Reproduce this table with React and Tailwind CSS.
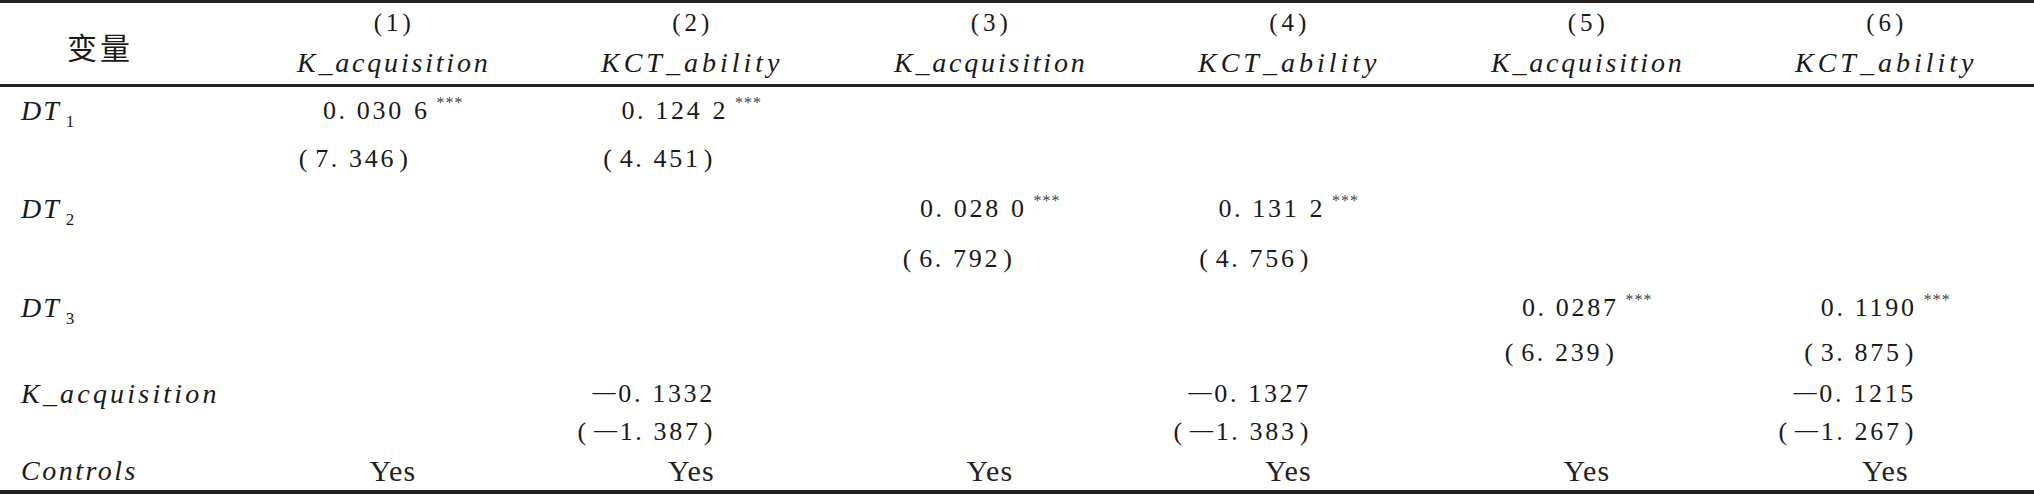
import React from "react";

const SERIF = "font-['Liberation_Serif',serif]";

function Num({ s, stars }) {
  return (
    <div className={`${SERIF} text-[26px] leading-none tracking-[2.7px] whitespace-nowrap text-[#1a1a1a]`}>
      {s.split("").map((ch, i) => {
        if (ch === "−")
          return (
            <span key={i} className="text-[23px] leading-[0] align-[3px]">
              —
            </span>
          );
        if (ch === ".")
          return (
            <span key={i} className="mr-[9px]">
              .
            </span>
          );
        if (ch === "(")
          return (
            <span key={i} className="mr-[5px]">
              (
            </span>
          );
        if (ch === ")")
          return (
            <span key={i} className="ml-[3px]">
              )
            </span>
          );
        if (ch === " ") return <span key={i} className="inline-block w-[10px]" />;
        return <span key={i}>{ch}</span>;
      })}
      {stars && (
        <span className="ml-[7px] text-[16px] leading-[0] tracking-[1px] align-[11px] text-[#444]">***</span>
      )}
    </div>
  );
}

const RIGHT_PAD = ["pr-[131px]", "pr-[125px]", "pr-[124px]", "pr-[126px]", "pr-[119px]", "pr-[118px]"];

function Cell({ cell, col }) {
  if (!cell) return <div />;
  if (cell.t === "c")
    return (
      <div className="flex items-center justify-center pl-[2px]">
        <Num s={cell.v} stars />
      </div>
    );
  if (cell.t === "y")
    return (
      <div className="flex items-center justify-center">
        <div className={`${SERIF} text-[30px] leading-none tracking-[1px] pl-[1px] text-[#222]`}>Yes</div>
      </div>
    );
  return (
    <div className={`flex items-center justify-end ${RIGHT_PAD[col]}`}>
      <Num s={cell.v} />
    </div>
  );
}

function DT({ n }) {
  return (
    <div className={`${SERIF} italic text-[28px] leading-none tracking-[2px] whitespace-nowrap text-[#1a1a1a]`}>
      DT
      <span className="ml-[5px] not-italic text-[17px] leading-[0] tracking-normal align-[-7px]">{n}</span>
    </div>
  );
}

function Word({ w, track }) {
  return (
    <div className={`${SERIF} italic text-[28px] leading-none whitespace-nowrap text-[#1a1a1a] ${track}`}>{w}</div>
  );
}

const c = (v) => ({ t: "c", v });
const r = (v) => ({ t: "r", v });
const Y = { t: "y" };
const _ = null;

const rows = [
  { label: <DT n="1" />, h: "h-[47px]", cells: [c("0.030 6"), c("0.124 2"), _, _, _, _] },
  { label: null, h: "h-[50px]", cells: [r("(7.346)"), r("(4.451)"), _, _, _, _] },
  { label: <DT n="2" />, h: "h-[50px]", cells: [_, _, c("0.028 0"), c("0.131 2"), _, _] },
  { label: null, h: "h-[50px]", cells: [_, _, r("(6.792)"), r("(4.756)"), _, _] },
  { label: <DT n="3" />, h: "h-[48px]", cells: [_, _, _, _, c("0.0287"), c("0.1190")] },
  { label: null, h: "h-[42px]", cells: [_, _, _, _, r("(6.239)"), r("(3.875)")] },
  {
    label: <Word w="K_acquisition" track="tracking-[3.2px]" />,
    h: "h-[39px]",
    cells: [_, r("−0.1332"), _, r("−0.1327"), _, r("−0.1215")],
  },
  { label: null, h: "h-[38px]", cells: [_, r("(−1.387)"), _, r("(−1.383)"), _, r("(−1.267)")] },
  {
    label: <Word w="Controls" track="tracking-[2.5px]" />,
    h: "h-[39px]",
    cells: [Y, Y, Y, Y, Y, Y],
  },
];

const heads = [
  ["(1)", "K_acquisition", "tracking-[2.8px]"],
  ["(2)", "KCT_ability", "tracking-[4px]"],
  ["(3)", "K_acquisition", "tracking-[2.8px]"],
  ["(4)", "KCT_ability", "tracking-[4px]"],
  ["(5)", "K_acquisition", "tracking-[2.8px]"],
  ["(6)", "KCT_ability", "tracking-[4px]"],
];

export default function App() {
  return (
    <div className="w-[2034px] h-[494px] bg-white border-t-[3px] border-b-[4px] border-[#222] flex flex-col">
      <div className="grid grid-cols-[243px_repeat(6,minmax(0,1fr))] h-[84px] border-b-[3px] border-[#222]">
        <div className="flex items-center pl-[67px] pt-[4px]">
          <div className="font-['Noto_Sans_CJK_SC',sans-serif] text-[30px] leading-none tracking-[3px] text-[#1a1a1a]">
            变量
          </div>
        </div>
        {heads.map(([n, w, tr], i) => (
          <div key={i} className="flex flex-col items-center pt-[7px]">
            <div className={`${SERIF} h-[26px] text-[25px] leading-[26px] tracking-[4px] pl-[4px] text-[#1a1a1a]`}>{n}</div>
            <div className={`${SERIF} italic h-[28px] mt-[13px] text-[28px] leading-[28px] pl-[3px] text-[#1a1a1a] ${tr}`}>
              {w}
            </div>
          </div>
        ))}
      </div>
      {rows.map((row, ri) => (
        <div key={ri} className={`grid grid-cols-[243px_repeat(6,minmax(0,1fr))] ${row.h}`}>
          <div className="flex items-center pl-[21px]">{row.label}</div>
          {row.cells.map((cell, ci) => (
            <Cell key={ci} cell={cell} col={ci} />
          ))}
        </div>
      ))}
    </div>
  );
}
